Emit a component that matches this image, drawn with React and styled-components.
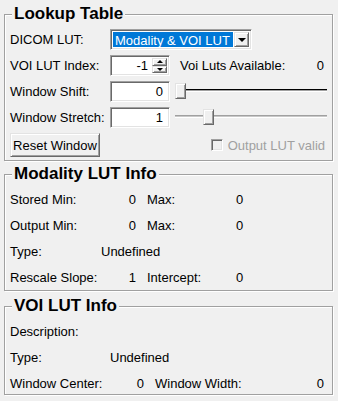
import React from 'react'
import styled, { createGlobalStyle } from "styled-components"

const Global = createGlobalStyle`
body{
  margin:0;
  background:#f0f0f0;
  font-family:"Liberation Sans", Arial, sans-serif;
  font-size:13px;
  color:#000;
}
`;

const Page = styled.div`
width:338px;
height:401px;
box-sizing:border-box;
padding:5px 5px 0 4px;
display:flex;
flex-direction:column;
`;

const Group = styled.fieldset`
margin:${p => p.$mt || 0}px 0 0 0;
padding:6px 5px ${p => p.$pb}px 5px;
border:1px solid #a0a0a0;
box-shadow:inset 1px 1px 0 #fff, 1px 1px 0 #fff;
min-width:0;
`;

const Legend = styled.legend`
font-size:17px;
font-weight:bold;
line-height:18px;
padding:0 2px;
margin-left:2px;
background:#f0f0f0;
`;

const Grid = styled.div`
display:grid;
grid-template-columns:${p => p.$cols};
grid-template-rows:${p => p.$rows || "none"};
grid-auto-rows:21px;
row-gap:5px;
align-items:center;
`;

const Label = styled.div`
line-height:21px;
white-space:nowrap;
grid-column:${p => p.$col || "auto"};
padding-left:${p => p.$pl || 0}px;
`;

const Value = styled.div`
line-height:21px;
white-space:nowrap;
text-align:${p => p.$align || "right"};
padding-right:${p => p.$pr || 0}px;
grid-column:${p => p.$col || "auto"};
`;

const sunken = `
border:1px solid;
border-color:#a0a0a0 #fff #fff #a0a0a0;
box-shadow:inset 1px 1px 0 #696969, inset -1px -1px 0 #e3e3e3;
`;

const raised = `
border:1px solid;
border-color:#e3e3e3 #696969 #696969 #e3e3e3;
box-shadow:inset 1px 1px 0 #fff, inset -1px -1px 0 #a0a0a0;
background:#f0f0f0;
`;

const Combo = styled.div`
grid-column:2 / 4;
width:142px;
height:21px;
box-sizing:border-box;
${sunken}
background:#fff;
padding:2px;
display:flex;
gap:1px;
`;

const Selected = styled.div`
flex:1;
background:#0078d7;
color:#fff;
line-height:17px;
padding-left:2px;
white-space:nowrap;
`;

const DropBtn = styled.div`
width:15px;
box-sizing:border-box;
${raised}
display:flex;
align-items:center;
justify-content:center;
`;

const Arrow = styled.span`
width:0;
height:0;
border-left:${p => p.$size}px solid transparent;
border-right:${p => p.$size}px solid transparent;
${p => p.$up ? "border-bottom" : "border-top"}:${p => p.$size}px solid #000;
`;

const Edit = styled.div`
width:60px;
height:21px;
box-sizing:border-box;
${sunken}
background:#fff;
display:flex;
`;

const EditText = styled.div`
flex:1;
text-align:right;
line-height:19px;
padding-right:${p => p.$pr}px;
`;

const SpinCol = styled.div`
width:15px;
display:flex;
flex-direction:column;
padding:2px 2px 2px 0;
`;

const SpinBtn = styled.div`
flex:1;
box-sizing:border-box;
${raised}
display:flex;
align-items:center;
justify-content:center;
`;

const RightCell = styled.div`
display:flex;
justify-content:space-between;
padding:0 3px 0 10px;
line-height:21px;
white-space:nowrap;
`;

const Slider = styled.div`
position:relative;
height:21px;
margin-left:5px;
`;

const Track = styled.div`
position:absolute;
left:0;
right:0;
top:8px;
height:1px;
border-top:1px solid ${p => p.$active ? "#000" : "#a0a0a0"};
background:${p => p.$active ? "#a0a0a0" : "#c8c8c8"};
border-bottom:1px solid #fff;
`;

const Thumb = styled.div`
position:absolute;
top:2px;
width:11px;
height:16px;
box-sizing:border-box;
${raised}
`;

const Button = styled.div`
width:90px;
height:24px;
box-sizing:border-box;
${raised}
display:flex;
align-items:center;
justify-content:center;
white-space:nowrap;
`;

const CheckRow = styled.div`
display:flex;
align-items:center;
justify-content:flex-end;
gap:5px;
padding-right:2px;
color:#a0a0a0;
white-space:nowrap;
`;

const CheckBox = styled.span`
width:12px;
height:12px;
box-sizing:border-box;
${sunken}
background:#f0f0f0;
`;

const HSlider = ({ pos, active }) => (
  <Slider>
    <Track $active={active} />
    <Thumb style={{ left: pos }} />
  </Slider>
)

const App = () => {
  return (
    <Page>
      <Global />
      <Group $pb={3}>
        <Legend>Lookup Table</Legend>
        <Grid $cols="100px 60px 1fr" $rows="repeat(4, 21px) 24px">
          <Label>DICOM LUT:</Label>
          <Combo>
            <Selected>Modality &amp; VOI LUT</Selected>
            <DropBtn><Arrow $size={4} /></DropBtn>
          </Combo>

          <Label>VOI LUT Index:</Label>
          <Edit>
            <EditText $pr={4}>-1</EditText>
            <SpinCol>
              <SpinBtn><Arrow $up $size={3} /></SpinBtn>
              <SpinBtn><Arrow $size={3} /></SpinBtn>
            </SpinCol>
          </Edit>
          <RightCell><span>Voi Luts Available:</span><span>0</span></RightCell>

          <Label>Window Shift:</Label>
          <Edit><EditText $pr={6}>0</EditText></Edit>
          <HSlider pos={0} active />

          <Label>Window Stretch:</Label>
          <Edit><EditText $pr={6}>1</EditText></Edit>
          <HSlider pos={28} />

          <Button>Reset Window</Button>
          <div />
          <CheckRow><CheckBox />Output LUT valid</CheckRow>
        </Grid>
      </Group>

      <Group $mt={4} $pb={2}>
        <Legend>Modality LUT Info</Legend>
        <Grid $cols="91px 35px 100px 1fr">
          <Label>Stored Min:</Label>
          <Value>0</Value>
          <Label $pl={11}>Max:</Label>
          <Value $align="left">0</Value>

          <Label>Output Min:</Label>
          <Value>0</Value>
          <Label $pl={11}>Max:</Label>
          <Value $align="left">0</Value>

          <Label>Type:</Label>
          <Value $align="left" $col="2 / 5">Undefined</Value>

          <Label>Rescale Slope:</Label>
          <Value>1</Value>
          <Label $pl={11}>Intercept:</Label>
          <Value $align="left">0</Value>
        </Grid>
      </Group>

      <Group $mt={6} $pb={0}>
        <Legend>VOI LUT Info</Legend>
        <Grid $cols="100px 34px 1fr 60px">
          <Label $col="1 / 5">Description:</Label>

          <Label>Type:</Label>
          <Value $align="left" $col="2 / 5">Undefined</Value>

          <Label>Window Center:</Label>
          <Value>0</Value>
          <Label $pl={11}>Window Width:</Label>
          <Value $pr={3}>0</Value>
        </Grid>
      </Group>
    </Page>
  )
}

export default App;
